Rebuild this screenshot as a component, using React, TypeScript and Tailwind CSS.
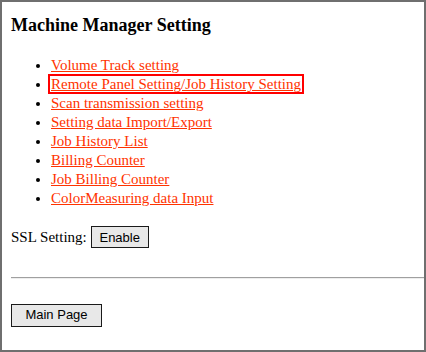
import React from 'react';

const links = [
  'Volume Track setting',
  'Remote Panel Setting/Job History Setting',
  'Scan transmission setting',
  'Setting data Import/Export',
  'Job History List',
  'Billing Counter',
  'Job Billing Counter',
  'ColorMeasuring data Input',
];

export default function App() {
  return (
    <main className="w-[426px] h-[352px] bg-white border-2 border-[#6f6f6f] pl-[9px] font-['Liberation_Serif',serif] text-black overflow-hidden">
      <h3 className="text-[18px] font-bold mt-[12px] leading-[22px]">Machine Manager Setting</h3>
      <ul className="list-disc pl-10 mt-[20px] text-[15px] leading-[19px]">
        {links.map((label, i) => (
          <li key={label}>
            <span className="relative">
              <a href="#" className="underline text-[#ff3300]">{label}</a>
              {i === 1 && (
                <span className="absolute -left-[3px] -right-[3px] -top-[2px] -bottom-[2px] border-2 border-[#ff0000]" />
              )}
            </span>
          </li>
        ))}
      </ul>
      <div className="mt-[18px] flex items-center text-[15px]">
        <span>SSL Setting:</span>
        <button className="ml-[4px] h-[22px] w-[58px] border border-[#1a1a1a] bg-[#e8e8e8] font-['Liberation_Sans',sans-serif] text-[13px]">
          Enable
        </button>
      </div>
      <hr className="mt-[28px] border-t border-t-[#a0a0a0] border-b border-b-[#eeeeee]" />
      <button className="mt-[25px] w-[91px] h-[23px] border border-[#1a1a1a] bg-[#e8e8e8] font-['Liberation_Sans',sans-serif] text-[13px]">
        Main Page
      </button>
    </main>
  );
}
